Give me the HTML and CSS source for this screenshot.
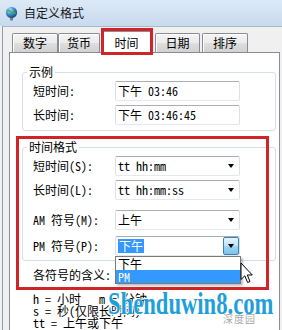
FILE: index.html
```html
<!DOCTYPE html>
<html>
<head>
<meta charset="utf-8">
<link rel="stylesheet" href="styles.css">
</head>
<body>
<div class="win">
  <div class="titlebar">
    <svg class="appicon" width="13" height="15" viewBox="0 0 13 15">
      <defs>
        <radialGradient id="gl" cx="35%" cy="30%" r="75%">
          <stop offset="0" stop-color="#d4efff"/>
          <stop offset="0.45" stop-color="#3f95d8"/>
          <stop offset="1" stop-color="#173f78"/>
        </radialGradient>
      </defs>
      <rect x="5" y="11" width="3" height="3.5" fill="#7a8088"/>
      <circle cx="6.5" cy="6.5" r="5.6" fill="url(#gl)"/>
      <path d="M2.2 5.2 C3.5 3.6 5 4.8 6 6 C7 7.2 8.6 6.4 10.6 7.6" stroke="#4aa85a" stroke-width="1.6" fill="none"/>
    </svg>
    <span class="title">自定义格式</span>
  </div>
  <div class="client">
    <div class="tabs">
      <div class="tab t1">数字</div>
      <div class="tab t2">货币</div>
      <div class="tab sel">时间</div>
      <div class="tab t4">日期</div>
      <div class="tab t5">排序</div>
    </div>
    <div class="panel">
      <fieldset class="group g1">
        <legend>示例</legend>
        <div class="row"><span class="lbl">短时间:</span><div class="field">下午 03:46</div></div>
        <div class="row r2"><span class="lbl">长时间:</span><div class="field">下午 03:46:45</div></div>
      </fieldset>
      <fieldset class="group g2">
        <legend>时间格式</legend>
        <div class="row"><span class="lbl">短时间(S):</span><div class="combo"><span class="val">tt hh:mm</span><span class="btn"><i class="arrow"></i></span></div></div>
        <div class="row r2"><span class="lbl">长时间(L):</span><div class="combo"><span class="val">tt hh:mm:ss</span><span class="btn"><i class="arrow"></i></span></div></div>
        <div class="row r3"><span class="lbl">AM 符号(M):</span><div class="combo"><span class="val">上午</span><span class="btn"><i class="arrow"></i></span></div></div>
        <div class="row r4"><span class="lbl">PM 符号(P):</span><div class="combo open"><span class="val"><span class="hl">下午</span></span><span class="btn hot"><i class="arrow"></i></span><ul class="droplist"><li>下午</li><li class="on">PM</li></ul></div></div>
      </fieldset>
      <div class="meaning">各符号的含义:</div>
      <div class="keys">
        <div class="key">h = 小时   m = 分钟</div>
        <div class="key">s = 秒(仅限长时间)</div>
        <div class="key">tt = 上午或下午</div>
      </div>
    </div>
  </div>
  <div class="mark mark-tab"></div>
  <div class="mark mark-group"></div>
  <svg class="cursor" width="14" height="23" viewBox="0 0 14 23">
    <path d="M1 1 L1 17.5 L4.8 13.8 L7.6 20.5 L10 19.5 L7.3 13 L12.3 13 Z" fill="#fff" stroke="#000" stroke-width="1" stroke-linejoin="round"/>
  </svg>
  <div class="watermark">Shenduwin8.com</div>
  <div class="wm-small">深度园</div>
</div>
</body>
</html>
```
FILE: styles.css
```css
* { box-sizing: border-box; }
html, body { margin: 0; padding: 0; }
body {
  width: 282px;
  height: 330px;
  overflow: hidden;
  background: #fff;
  font-family: "Noto Sans CJK SC", "Noto Sans", sans-serif;
  font-size: 12px;
  color: #000;
}
.win {
  position: relative;
  width: 282px;
  height: 330px;
  overflow: hidden;
  background: #f0f0f0;
}
.titlebar {
  height: 26px;
  display: flex;
  align-items: center;
  gap: 6px;
  padding-left: 5px;
  background: linear-gradient(#dde9f6, #c8daee);
}
.title { font-size: 12px; line-height: 16px; color: #151515; }
.client {
  margin-left: 2px;
  border-left: 1px solid #8f9db0;
  border-top: 1px solid #a9b8ca;
  height: 304px;
  padding-top: 4px;
  background: #f0f0f0;
}
.tabs {
  display: flex;
  align-items: flex-end;
  height: 22px;
  margin-bottom: -1px;
  padding-left: 9px;
  position: relative;
  z-index: 1;
}
.tab {
  height: 19px;
  margin-bottom: 1px;
  border: 1px solid #898c95;
  border-bottom: none;
  border-radius: 2px 2px 0 0;
  background: linear-gradient(#f4f4f4, #ececec 48%, #dedede 52%, #d2d2d2);
  display: flex;
  align-items: center;
  justify-content: center;
  font-size: 12px;
  line-height: 14px;
  box-shadow: inset 1px 1px 0 #fff;
}
.t1 { width: 46px; }
.t2 { width: 42px; margin-right: 1px; }
.sel {
  width: 51px;
  height: 22px;
  margin-bottom: 0;
  margin-right: 3px;
  background: #fff;
  box-shadow: none;
}
.t4 { width: 45px; margin-right: 2px; }
.t5 { width: 46px; }
.panel {
  margin-left: 6px;
  margin-right: 2px;
  border: 1px solid #898c95;
  background: #fff;
  height: 300px;
}
.group {
  margin: 11px 3px 0 12px;
  padding: 1px 4px 5px 10px;
  border: 1px solid #d5dfe5;
  border-radius: 3px;
  min-width: 0;
}
.group legend {
  margin-left: -6px;
  padding: 0 2px;
  font-size: 12px;
  line-height: 16px;
}
.g2 { margin-top: 8px; padding-bottom: 4px; }
.row {
  display: flex;
  align-items: center;
  height: 20px;
}
.r2 { margin-top: 4px; }
.r3 { margin-top: 10px; }
.r4 { margin-top: 6px; }
.lbl {
  width: 82px;
  font-family: "Noto Sans Mono CJK SC", "Noto Sans CJK SC", "Liberation Mono", monospace;
  font-size: 12px;
  line-height: 16px;
  white-space: pre;
}
.field, .combo {
  width: 125px;
  height: 20px;
  border: 1px solid #dbdfe6;
  border-top-color: #abadb3;
  border-bottom-color: #e3e9ef;
  border-radius: 2px;
  background: #fff;
  display: flex;
  align-items: center;
  padding-left: 2px;
  font-family: "Noto Sans Mono CJK SC", "Noto Sans CJK SC", "Liberation Mono", monospace;
  font-size: 12px;
  line-height: 14px;
}
.val, .field { white-space: pre; }
.combo { position: relative; padding-right: 0; }
.val { flex: 1; }
.btn {
  width: 16px;
  height: 18px;
  display: flex;
  align-items: center;
  justify-content: center;
}
.arrow {
  width: 0;
  height: 0;
  border-left: 3.5px solid transparent;
  border-right: 3.5px solid transparent;
  border-top: 4px solid #000;
}
.btn.hot {
  border: 1px solid #3c7fb1;
  border-radius: 2px;
  background: linear-gradient(#e3f4fc, #bfe4f8 48%, #9dd5f3 52%, #7fc2ec);
}
.hl {
  background: #3399ff;
  color: #fff;
  padding: 0 1px;
  display: inline-block;
  line-height: 14px;
}
.droplist {
  position: absolute;
  left: -1px;
  top: 19px;
  width: 126px;
  margin: 0;
  padding: 0;
  list-style: none;
  border: 1px solid #7a7a7a;
  background: #fff;
  box-shadow: 2px 2px 2px rgba(0, 0, 0, 0.25);
  z-index: 3;
  white-space: normal;
}
.droplist li {
  height: 13px;
  line-height: 13px;
  padding-left: 2px;
}
.droplist li.on { background: #3399ff; color: #fff; }
.meaning {
  margin: 6px 0 0 23px;
  line-height: 16px;
  font-family: "Noto Sans Mono CJK SC", "Noto Sans CJK SC", monospace;
}
.keys { margin: 10px 0 0 23px; }
.key {
  height: 12px;
  line-height: 12px;
  white-space: pre;
  font-family: "Noto Sans Mono CJK SC", "Noto Sans CJK SC", "Liberation Mono", monospace;
  font-size: 12px;
}
.mark {
  position: absolute;
  border: 3px solid #cf2528;
  z-index: 4;
}
.mark-tab { left: 101px; top: 28px; width: 52px; height: 27px; }
.mark-group { left: 16px; top: 136px; width: 253px; height: 154px; }
.cursor { position: absolute; left: 240px; top: 262px; z-index: 6; }
.watermark {
  position: absolute;
  left: 108px;
  top: 288px;
  font-family: "Liberation Serif", serif;
  font-weight: bold;
  font-size: 31px;
  line-height: 31px;
  color: #1f9fda;
  transform: scaleX(0.73);
  transform-origin: left top;
  white-space: nowrap;
  text-shadow: 0 0 2px #fff, 1px 1px 0 #fff, -1px -1px 0 #fff;
  z-index: 5;
}
.wm-small {
  position: absolute;
  left: 223px;
  top: 313px;
  font-size: 10px;
  line-height: 11px;
  color: #a8a8a8;
  letter-spacing: 1px;
  z-index: 5;
}
```
